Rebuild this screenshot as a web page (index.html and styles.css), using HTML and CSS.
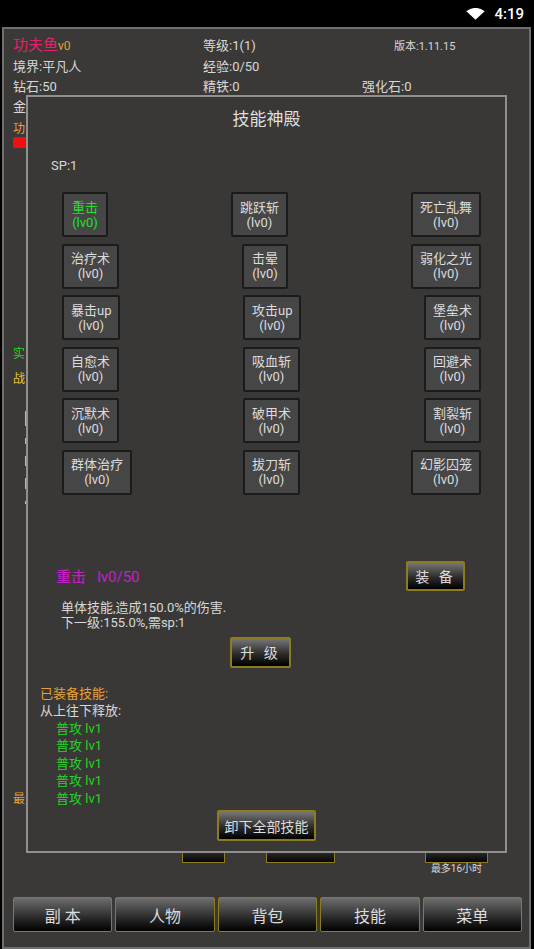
FILE: index.html
```html
<!DOCTYPE html>
<html lang="zh">
<head>
    <meta charset="UTF-8">
    <meta name="viewport" content="width=device-width, initial-scale=1.0">
    <title>功夫鱼 - 技能神殿</title>
    <link rel="stylesheet" href="styles.css">
</head>
<body>
    <div class="statusbar">
        <svg class="wifi" width="19" height="12" viewBox="0 0 19 12">
            <path d="M9.5 11.8 L0.3 3.2 Q9.5 -3.4 18.7 3.2 Z" fill="#fff"/>
        </svg>
        <span class="clock">4:19</span>
    </div>

    <div class="screen">
        <div class="info">
            <div class="info-row first">
                <span class="col1"><span class="name">功夫鱼</span><span class="ver">v0</span></span>
                <span class="col2">等级:1(1)</span>
                <span class="version">版本:1.11.15</span>
            </div>
            <div class="info-row">
                <span class="col1">境界:平凡人</span>
                <span class="col2">经验:0/50</span>
            </div>
            <div class="info-row">
                <span class="col1">钻石:50</span>
                <span class="col2 narrow">精铁:0</span>
                <span>强化石:0</span>
            </div>
            <div class="info-row">
                <span class="col1">金</span>
            </div>
        </div>

        <!-- stuff of the main page, mostly covered by the dialog -->
        <div class="under">
            <div class="tag orange">功</div>
            <div class="hp"></div>
            <div class="tag green gap-big">实</div>
            <div class="tag yellow gap-small">战</div>
            <div class="bits">
                <span class="bit" style="height: 15px"></span>
                <span class="bit" style="height: 6px"></span>
                <span class="bit" style="height: 10px"></span>
                <span class="bit" style="height: 11px"></span>
                <span class="bit" style="height: 3px"></span>
            </div>
            <div class="tag orange gap-last">最</div>
        </div>

        <div class="under-btns">
            <span class="mini b1"></span>
            <span class="mini b2"></span>
            <span class="mini-group">
                <span class="mini b3"></span>
                <span class="hint">最多16小时</span>
            </span>
        </div>

        <nav class="tabs">
            <button class="tab">副 本</button>
            <button class="tab">人物</button>
            <button class="tab">背包</button>
            <button class="tab">技能</button>
            <button class="tab">菜单</button>
        </nav>
    </div>

    <div class="dialog">
        <h2 class="title">技能神殿</h2>
        <div class="sp">SP:1</div>

        <div class="skills">
            <div class="skill-row">
                <button class="skill active">重击<br>(lv0)</button>
                <button class="skill">跳跃斩<br>(lv0)</button>
                <button class="skill">死亡乱舞<br>(lv0)</button>
            </div>
            <div class="skill-row">
                <button class="skill">治疗术<br>(lv0)</button>
                <button class="skill">击晕<br>(lv0)</button>
                <button class="skill">弱化之光<br>(lv0)</button>
            </div>
            <div class="skill-row">
                <button class="skill">暴击up<br>(lv0)</button>
                <button class="skill">攻击up<br>(lv0)</button>
                <button class="skill">堡垒术<br>(lv0)</button>
            </div>
            <div class="skill-row">
                <button class="skill">自愈术<br>(lv0)</button>
                <button class="skill">吸血斩<br>(lv0)</button>
                <button class="skill">回避术<br>(lv0)</button>
            </div>
            <div class="skill-row">
                <button class="skill">沉默术<br>(lv0)</button>
                <button class="skill">破甲术<br>(lv0)</button>
                <button class="skill">割裂斩<br>(lv0)</button>
            </div>
            <div class="skill-row">
                <button class="skill">群体治疗<br>(lv0)</button>
                <button class="skill">拔刀斩<br>(lv0)</button>
                <button class="skill">幻影囚笼<br>(lv0)</button>
            </div>
        </div>

        <div class="selected">
            <span class="selected-name">重击&nbsp;&nbsp;&nbsp;lv0/50</span>
            <button class="gold-btn equip">装 备</button>
        </div>
        <p class="desc">单体技能,造成150.0%的伤害.<br>下一级:155.0%,需sp:1</p>
        <button class="gold-btn upgrade">升 级</button>

        <div class="equipped">
            <div class="orange">已装备技能:</div>
            <div>从上往下释放:</div>
            <div class="slot">普攻 lv1</div>
            <div class="slot">普攻 lv1</div>
            <div class="slot">普攻 lv1</div>
            <div class="slot">普攻 lv1</div>
            <div class="slot">普攻 lv1</div>
        </div>
        <button class="gold-btn unequip">卸下全部技能</button>
    </div>
</body>
</html>
```

FILE: styles.css
```css
body {
    margin: 0;
    padding: 0;
    width: 534px;
    height: 949px;
    overflow: hidden;
    background-color: #000;
    font-family: Roboto, "Noto Sans CJK SC", sans-serif;
    color: #d8d8d8;
    position: relative;
}

button {
    font-family: inherit;
    color: #dcdcdc;
    cursor: pointer;
    padding: 0;
}

.statusbar {
    height: 27px;
    display: flex;
    align-items: center;
    justify-content: flex-end;
    padding-right: 10px;
    color: #fff;
}

.wifi {
    margin-right: 9px;
}

.clock {
    font-size: 15px;
    font-weight: 500;
}

.screen {
    box-sizing: border-box;
    height: 922px;
    margin: 0 3px 0 2px;
    border: 2px solid #6f6f6f;
    background-color: #3a3938;
    display: flex;
    flex-direction: column;
}

.info {
    padding: 6px 0 0 9px;
    font-size: 13px;
}

.info-row {
    display: flex;
    align-items: baseline;
    line-height: 20px;
}

.info-row.first {
    line-height: 21px;
}

.col1 {
    width: 190px;
}

.col2 {
    width: 191px;
}

.col2.narrow {
    width: 159px;
}

.name {
    color: #e2226c;
    font-size: 15px;
}

.ver {
    color: #e0a12a;
    font-size: 12px;
}

.version {
    font-size: 11px;
}

.under {
    padding-left: 9px;
}

.tag {
    font-size: 12px;
    line-height: 14px;
    margin-top: 5px;
}

.orange {
    color: #e8a033;
}

.green {
    color: #22d622;
}

.yellow {
    color: #e8c22e;
}

.gap-big {
    margin-top: 199px;
}

.gap-small {
    margin-top: 11px;
}

.gap-last {
    margin-top: 288px;
}

.hp {
    width: 14px;
    height: 11px;
    margin-top: 1px;
    background-color: #f01010;
    border-radius: 2px;
}

.bits {
    margin: 25px 0 0 12px;
    display: flex;
    flex-direction: column;
    gap: 12px;
}

.bit {
    width: 2px;
    background-color: #b8b8b8;
}

.under-btns {
    display: flex;
    margin-top: 27px;
    padding-left: 178px;
}

.mini {
    display: block;
    box-sizing: border-box;
    height: 30px;
    border: 1px solid #8c7c20;
    background: linear-gradient(#6c6c6c, #050505);
}

.b1 {
    width: 43px;
}

.b2 {
    width: 69px;
    margin-left: 41px;
}

.mini-group {
    margin-left: 90px;
    display: flex;
    flex-direction: column;
    align-items: center;
}

.b3 {
    width: 63px;
}

.hint {
    font-size: 10px;
    line-height: 12px;
}

.tabs {
    margin-top: auto;
    padding: 0 7px 15px 9px;
    display: flex;
    gap: 3px;
}

.tab {
    flex: 1;
    height: 35px;
    font-size: 16px;
    border: 1px solid #8c7c20;
    border-radius: 2px;
    background: linear-gradient(#6e6e6e, #2a2a2a 60%, #000);
}

/* overlay dialog */
.dialog {
    position: absolute;
    left: 26px;
    top: 95px;
    width: 481px;
    height: 758px;
    box-sizing: border-box;
    border: 2px solid #8f8f8f;
    background-color: #393837;
    display: flex;
    flex-direction: column;
    font-size: 13px;
}

.title {
    margin: 12px 0 0;
    font-size: 17px;
    font-weight: normal;
    line-height: 20px;
    text-align: center;
    color: #dedede;
}

.sp {
    margin-top: 29px;
    padding-left: 23px;
    line-height: 16px;
}

.skills {
    margin-top: 18px;
    padding: 0 24px 0 34px;
    display: flex;
    flex-direction: column;
    gap: 6.5px;
}

.skill-row {
    display: flex;
    justify-content: space-between;
}

.skill {
    height: 45px;
    box-sizing: border-box;
    padding: 0 7px;
    min-width: 46px;
    border: 2px solid #1b1b1b;
    border-radius: 2px;
    background-color: #474646;
    font-size: 13px;
    line-height: 15px;
}

.skill.active {
    color: #22e022;
}

.selected {
    margin-top: 66px;
    height: 30px;
    padding: 0 40px 0 28px;
    display: flex;
    align-items: center;
    justify-content: space-between;
}

.selected-name {
    color: #c81ec8;
    font-size: 15px;
}

.gold-btn {
    box-sizing: border-box;
    border: 2px solid #8c7c20;
    border-radius: 2px;
    background: linear-gradient(#767676, #2c2c2c 55%, #000);
    font-size: 14px;
}

.equip {
    width: 59px;
    height: 30px;
    letter-spacing: 3px;
}

.desc {
    margin: 9px 0 0;
    padding-left: 33px;
    line-height: 15px;
}

.upgrade {
    align-self: flex-start;
    margin: 7px 0 0 202px;
    width: 61px;
    height: 31px;
    letter-spacing: 3px;
}

.equipped {
    margin-top: 17px;
    padding-left: 12px;
    line-height: 17.5px;
}

.slot {
    padding-left: 16px;
    color: #22d622;
}

.unequip {
    align-self: center;
    margin-top: 3px;
    width: 99px;
    height: 31px;
}
```
